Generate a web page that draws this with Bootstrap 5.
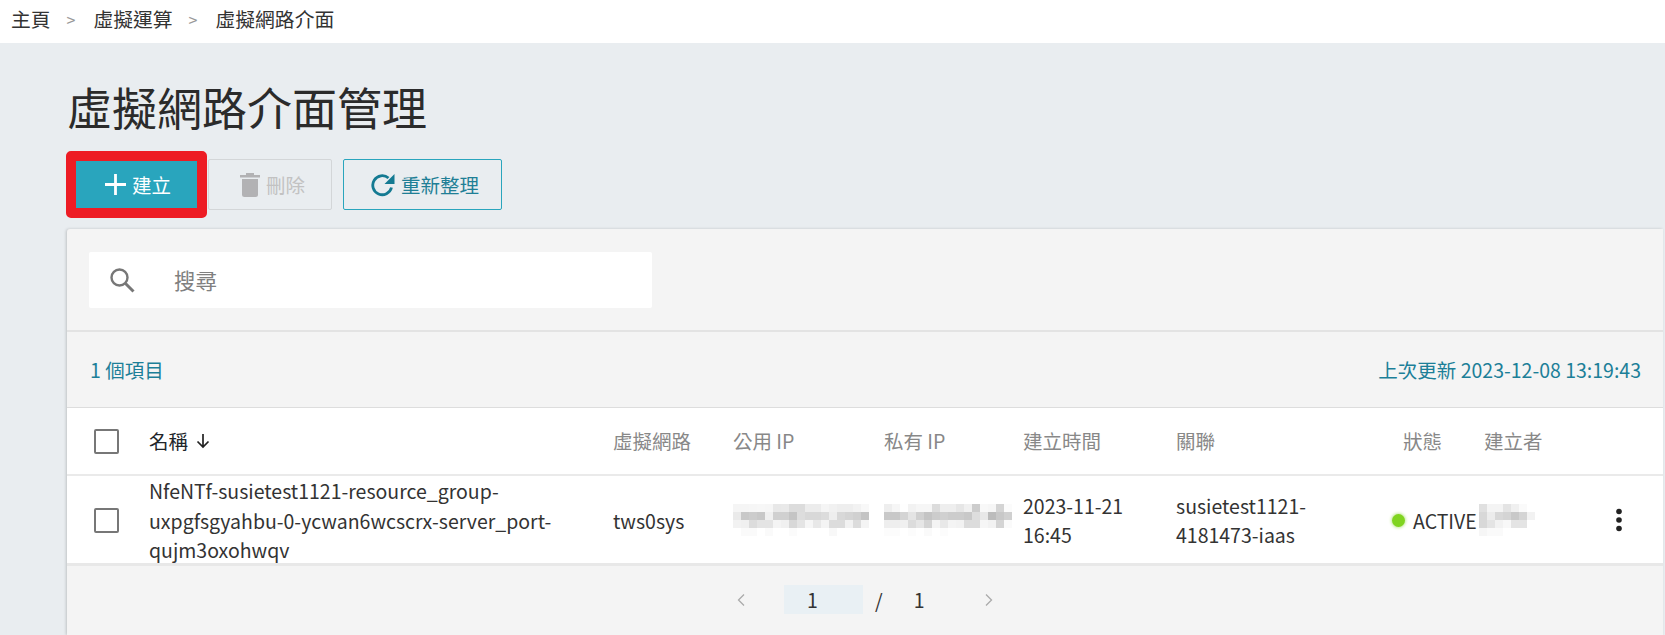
<!DOCTYPE html>
<html lang="zh-Hant">
<head>
<meta charset="utf-8">
<link href="https://cdn.jsdelivr.net/npm/bootstrap@5.3.0/dist/css/bootstrap.min.css" rel="stylesheet">
<style>
html,body{height:635px;overflow:hidden}
body{background:#e9edf0;font-family:"Noto Sans CJK TC","Noto Sans",sans-serif;font-size:19.5px;color:#333}
.crumbs{height:43px;background:#fff;padding:0 12px 5px 11px;font-size:19.8px;color:#333}
.crumb-sep{color:#999;margin:0 18px 0 16px;font-size:16px}
.page-wrap{padding:0 2px 0 67px}
.page-title{font-size:45px;font-weight:400;line-height:60px;margin:0;padding-top:34px;color:#2b2b2b;height:108px}
.tools{height:78px;padding-top:8px;align-items:flex-start}
.red-box{border:10px solid #ed1c24;border-radius:5px;margin-left:-1px;margin-top:-8px;line-height:0}
.tool-btn{height:51px;font-size:19.5px;border-radius:2px;display:inline-flex;align-items:center;justify-content:center;gap:6px;padding:0}
.btn-create{width:121px;height:47px;background:#29a5bd;color:#fff;border:0;border-radius:0;padding-left:3px}
.btn-create:hover{background:#29a5bd;color:#fff}
.btn-del{width:124px;margin-left:1px;padding-left:5px;background:transparent;border:1px solid #d3d6d8;color:#c2c2c2}
.btn-del:disabled{background:transparent;border-color:#d3d6d8;color:#c2c2c2;opacity:1}
.btn-ref{width:159px;margin-left:11px;padding-left:5px;background:transparent;border:1px solid #29a5bd;color:#1f7f96}
.list-panel{background:#f4f4f4;box-shadow:-1px 0 3px rgba(0,0,0,.18);height:406px;border-top-left-radius:3px}
.search-row{height:103px;padding:23px 0 0 22px;border-bottom:2px solid #e3e3e3}
.search-box{width:563px;height:56px;background:#fff;border-radius:2px;color:#808080;font-size:21.5px}
.search-ico{margin-left:20px;margin-right:39px}
.meta-row{height:76px;padding:0 22px 0 23px;color:#1c7f98;border-bottom:1px solid #ddd}
.grid-row{display:grid;grid-template-columns:82px 464px 120px 151px 139px 153px 227px 81px 90px 1fr;background:#fff;align-items:center}
.head-row{height:68px;border-bottom:2px solid #eaeaea;color:#888}
.body-row{height:90px;border-bottom:3px solid #e8e8e8;color:#333;line-height:29.5px}
.box-mark{width:25px;height:25px;border:2px solid #777;border-radius:2px;margin-left:27px;background:#fff}
.status-dot{width:13px;height:13px;border-radius:50%;background:#80d41f;box-shadow:0 0 3px 1px #c5ea9b;flex:none}
.status-col{margin-left:-11px;margin-right:-40px;gap:8px}
.mosaic{display:block}
.creator-cell{margin-left:-5px}
.more-col{justify-self:center;line-height:0}
.pager{height:67px;color:#333;padding-left:669px}
.page-input{width:79px;height:29px;background:#e9f0f4;padding-left:23px;line-height:29px;margin:0 12px 0 38px}
.total-page{margin-left:31px}
.next-ico{margin-left:60px}
</style>
</head>
<body>
<nav class="crumbs d-flex align-items-center" aria-label="breadcrumb">
  <span>主頁</span><span class="crumb-sep">&gt;</span><span>虛擬運算</span><span class="crumb-sep">&gt;</span><span>虛擬網路介面</span>
</nav>
<main class="page-wrap">
  <h1 class="page-title">虛擬網路介面管理</h1>
  <div class="tools d-flex">
    <div class="red-box"><button class="btn tool-btn btn-create" type="button">
      <svg width="21" height="21" viewBox="0 0 21 21"><path d="M10.500 0v21M0 10.500h21" stroke="#fff" stroke-width="2.800" fill="none"/></svg><span>建立</span></button></div>
    <button class="btn tool-btn btn-del" type="button" disabled>
      <svg width="20" height="25" viewBox="0 0 20 25"><path d="M0 3h20v2.500H0zM6 1h8v2H6z" fill="#b2b2b4"/><path d="M2 7h16v15.500a2.500 2.500 0 0 1-2.500 2.500h-11A2.500 2.500 0 0 1 2 22.500z" fill="#b2b2b4"/></svg><span>刪除</span></button>
    <button class="btn tool-btn btn-ref" type="button">
      <svg width="24" height="24" viewBox="0 0 24 24"><path d="M20.500 14.500A9.500 9.500 0 1 1 17.500 5" stroke="#147a92" stroke-width="2.800" fill="none"/><path d="M23.500 1v10h-10z" fill="#147a92"/></svg><span>重新整理</span></button>
  </div>
  <section class="list-panel">
    <div class="search-row">
      <div class="search-box d-flex align-items-center">
        <svg class="search-ico" width="26" height="26" viewBox="0 0 26 26"><circle cx="10.500" cy="10.500" r="8" stroke="#777" stroke-width="2.400" fill="none"/><path d="M16.500 16.500l8 8" stroke="#777" stroke-width="3" fill="none"/></svg>
        <span>搜尋</span>
      </div>
    </div>
    <div class="meta-row d-flex align-items-center justify-content-between"><span>1 個項目</span><span>上次更新 2023-12-08 13:19:43</span></div>
    <div class="grid-row head-row">
      <div class="box-mark"></div>
      <div class="text-dark d-flex align-items-center gap-2">名稱<svg width="14" height="16" viewBox="0 0 14 16"><path d="M7 1v13M1.500 8.500L7 14l5.500-5.500" stroke="#222" stroke-width="1.700" fill="none"/></svg></div>
      <div>虛擬網路</div><div>公用 IP</div><div>私有 IP</div><div>建立時間</div><div>關聯</div><div>狀態</div><div>建立者</div><div></div>
    </div>
    <div class="grid-row body-row">
      <div class="box-mark"></div>
      <div>NfeNTf-susietest1121-resource_group-<br>uxpgfsgyahbu-0-ycwan6wcscrx-server_port-<br>qujm3oxohwqv</div>
      <div>tws0sys</div>
      <div><svg class="mosaic" width="136" height="32" data-rows="f5 f5 f6 f7 f6 e8 e9 dc dc ec ec f5 f1 ee ee f2 f8|ea c8 cc c8 f0 d0 d0 c4 dd d8 d8 dc ee d8 d4 d0 c4|f2 f0 dc e4 e4 f4 f0 d8 e4 f6 e8 f4 dc dc f2 dc f4|ff fa fa ff fa ff ff fb ff ff ff ff f8 ff ff ff ff"></svg></div>
      <div><svg class="mosaic" width="128" height="32" data-rows="ee f6 fe f2 f6 f6 dc ee ee e6 f0 cc f8 f6 d4 fb|c8 c8 d4 e4 d0 c4 cc d0 cc cc c8 dd e8 bc c8 d0|ee ee f0 dc e6 d4 f4 e8 f4 f2 dc dc f6 f2 d4 fa|fc fc ff fc ff fa ff fc ff ff ff ff ff ff ff ff"></svg></div>
      <div>2023-11-21<br>16:45</div>
      <div>susietest1121-<br>4181473-iaas</div>
      <div class="status-col d-flex align-items-center"><span class="status-dot"></span><span>ACTIVE</span></div>
      <div class="creator-cell"><svg class="mosaic" width="56" height="32" data-rows="e0 f4 f4 e4 f0 fa ff|d8 ec d8 d4 c8 d4 f2|d8 e4 f2 f8 e4 e4 ff|f6 fa fa ff ff ff ff"></svg></div>
      <div class="more-col"><svg width="6" height="24" viewBox="0 0 6 24"><circle cx="3" cy="3.500" r="2.800" fill="#222"/><circle cx="3" cy="12" r="2.800" fill="#222"/><circle cx="3" cy="20.500" r="2.800" fill="#222"/></svg></div>
    </div>
    <div class="pager d-flex align-items-center">
      <svg width="10" height="14" viewBox="0 0 10 14"><path d="M8 1.500L2.500 7 8 12.500" stroke="#aaa" stroke-width="1.300" fill="none"/></svg>
      <span class="page-input">1</span><span>/</span><span class="total-page">1</span>
      <svg class="next-ico" width="10" height="14" viewBox="0 0 10 14"><path d="M2 1.500L7.500 7 2 12.500" stroke="#aaa" stroke-width="1.300" fill="none"/></svg>
    </div>
  </section>
</main>
<script src="https://cdn.jsdelivr.net/npm/bootstrap@5.3.0/dist/js/bootstrap.bundle.min.js"></script>
<script>
document.querySelectorAll('svg[data-rows]').forEach(function(svg){
  var html='';
  svg.dataset.rows.split('|').forEach(function(row,y){
    row.split(' ').forEach(function(v,x){
      html+='<rect x="'+x*8+'" y="'+y*8+'" width="8" height="8" fill="#'+v+v+v+'"/>';
    });
  });
  svg.innerHTML=html;
});
</script>
</body>
</html>
